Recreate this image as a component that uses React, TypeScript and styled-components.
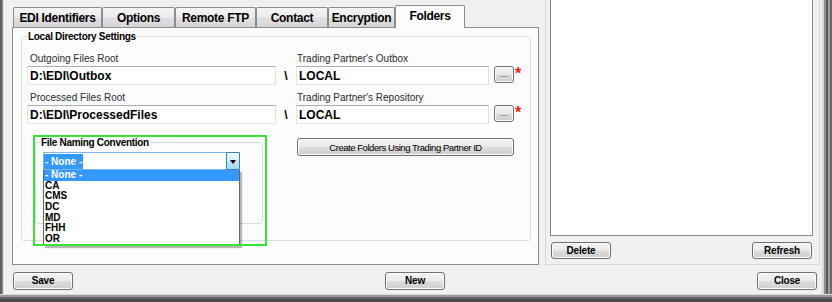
import React from "react";
import styled, { createGlobalStyle } from "styled-components";

const GlobalStyle = createGlobalStyle`
  html, body { margin: 0; padding: 0; }
  body { font-family: "Liberation Sans", Arial, sans-serif; background: #f0eff1; }
  * { box-sizing: border-box; }
`;

const Window = styled.div`
  width: 832px;
  height: 302px;
  display: flex;
  flex-direction: column;
  overflow: hidden;
`;

const FrameRow = styled.div`
  display: flex;
  height: 294px;
`;

const LeftFrame = styled.div`
  width: 4px;
  background: linear-gradient(to right, #555 0, #707070 2px, #a0a0a0 3px, #e4e4e4 3px);
`;

const RightFrame = styled.div`
  width: 10px;
  background: linear-gradient(
    to right,
    #d8d8d8 0 2px,
    #8e8e8e 2px 4px,
    #5a5a5a 4px 6px,
    #9c9c9c 6px 8px,
    #6a6a6a 8px 10px
  );
`;

const BottomFrame = styled.div`
  height: 8px;
  background: linear-gradient(
    to bottom,
    #d8d8d8 0 1px,
    #9a9a9a 1px 3px,
    #636363 3px 5px,
    #4a4a4a 5px 8px
  );
`;

const Client = styled.div`
  flex: 1;
  display: flex;
  flex-direction: column;
  background: #f0eff1;
`;

const TopRow = styled.div`
  display: flex;
  height: 265px;
`;

const TabArea = styled.div`
  margin-left: 8px;
  width: 527px;
  padding-top: 5px;
  display: flex;
  flex-direction: column;
`;

const TabStrip = styled.div`
  display: flex;
  align-items: flex-end;
  height: 22px;
  padding-left: 1px;
`;

const Tab = styled.div<{ $w: number; $active?: boolean }>`
  width: ${(p) => p.$w}px;
  height: ${(p) => (p.$active ? 23 : 20)}px;
  margin-bottom: ${(p) => (p.$active ? -1 : 0)}px;
  position: relative;
  z-index: ${(p) => (p.$active ? 2 : 0)};
  border: 1px solid #898c95;
  border-bottom: none;
  border-radius: 2px 2px 0 0;
  background: ${(p) =>
    p.$active
      ? "#fcfcfc"
      : "linear-gradient(to bottom, #f4f4f4 0%, #ececec 45%, #dfdfdf 55%, #d6d6d6 100%)"};
  display: flex;
  align-items: center;
  justify-content: center;
  padding-bottom: ${(p) => (p.$active ? 3 : 0)}px;
  font: bold 12px/14px "Liberation Sans", Arial, sans-serif;
  letter-spacing: -0.3px;
  color: #000;
  white-space: nowrap;
`;

const TabPanel = styled.div`
  flex: 1;
  border: 1px solid #898c95;
  background: #fcfcfc;
  padding: 3px 7px 0 8px;
`;

const GroupBox = styled.fieldset<{ $h: number; $w?: number }>`
  margin: 0;
  min-width: 0;
  height: ${(p) => p.$h}px;
  ${(p) => (p.$w ? `width: ${p.$w}px;` : "")}
  border: 1px solid #d5dfe5;
  border-radius: 3px;
  padding: 0;
`;

const GroupLegend = styled.legend<{ $x: number }>`
  margin-left: ${(p) => p.$x}px;
  padding: 0 1px;
  font: bold 10px/11px "Liberation Sans", Arial, sans-serif;
  letter-spacing: -0.3px;
  color: #000;
`;

const GroupContent = styled.div`
  padding: 11px 0 0 5px;
  display: flex;
  flex-direction: column;
`;

const FieldRow = styled.div<{ $mt?: number }>`
  display: flex;
  align-items: flex-start;
  margin-top: ${(p) => p.$mt ?? 0}px;
`;

const FieldBlock = styled.div<{ $w: number }>`
  width: ${(p) => p.$w}px;
  display: flex;
  flex-direction: column;
`;

const FieldLabel = styled.div<{ $indent: number }>`
  height: 13px;
  padding-left: ${(p) => p.$indent}px;
  font: 10px/12px "Liberation Sans", Arial, sans-serif;
  color: #2a2a2a;
  white-space: nowrap;
`;

const TextBox = styled.div`
  height: 19px;
  border: 1px solid;
  border-color: #abadb3 #dbdfe6 #e3e9ef #e2e3ea;
  background: #fff;
  padding-left: 2px;
  display: flex;
  align-items: center;
  font: bold 12px/14px "Liberation Sans", Arial, sans-serif;
  color: #000;
  white-space: nowrap;
`;

const PathSep = styled.div`
  width: 20px;
  height: 19px;
  margin-top: 13px;
  display: flex;
  align-items: center;
  justify-content: center;
  font: bold 12px/14px "Liberation Sans", Arial, sans-serif;
  color: #000;
`;

const WinButton = styled.button<{ $w: number; $h: number }>`
  width: ${(p) => p.$w}px;
  height: ${(p) => p.$h}px;
  margin: 0;
  padding: 0;
  border: 1px solid #707070;
  border-radius: 3px;
  background: linear-gradient(to bottom, #f2f2f2 0%, #ebebeb 49%, #dddddd 51%, #cfcfcf 100%);
  box-shadow: inset 0 0 0 1px #fbfbfb;
  font: bold 10px/12px "Liberation Sans", Arial, sans-serif;
  letter-spacing: -0.2px;
  color: #000;
  display: flex;
  align-items: center;
  justify-content: center;
  white-space: nowrap;
`;

const BrowseButton = styled(WinButton)`
  margin-top: 13px;
  margin-left: 5px;
  font: 9px/9px "Liberation Sans", Arial, sans-serif;
  color: #444;
  align-items: flex-end;
  padding-bottom: 3px;
`;

const Required = styled.span`
  margin-top: 13px;
  margin-left: 1px;
  font: bold 16px/16px "Liberation Sans", Arial, sans-serif;
  color: #e41c1c;
`;

const LowerRow = styled.div`
  display: flex;
  align-items: flex-start;
  margin-top: 11px;
`;

const Highlight = styled.div`
  position: relative;
  margin-left: 6px;
  width: 234px;
  height: 111px;
  padding: 2px;
  &::after {
    content: "";
    position: absolute;
    inset: 0;
    border: 2px solid #36e636;
    z-index: 3;
    pointer-events: none;
  }
`;

const InnerContent = styled.div`
  padding: 4px 0 0 7px;
`;

const Combo = styled.div`
  width: 197px;
  height: 18px;
  border: 1px solid #7eb4ea;
  background: #fff;
  display: flex;
  align-items: stretch;
`;

const ComboText = styled.div`
  flex: 1;
  display: flex;
  align-items: center;
`;

const Selection = styled.span`
  background: #3399ff;
  color: #fff;
  font: bold 10px/15px "Liberation Sans", Arial, sans-serif;
  padding: 0 1px;
`;

const ComboArrow = styled.div`
  width: 14px;
  margin: -1px -1px -1px 0;
  border: 1px solid #3c7fb1;
  border-radius: 0 2px 2px 0;
  background: linear-gradient(to bottom, #eaf6fd 0%, #d9f0fc 49%, #bee6fd 51%, #a7d9f5 100%);
  display: flex;
  align-items: center;
  justify-content: center;
  &::before {
    content: "";
    border-left: 3px solid transparent;
    border-right: 3px solid transparent;
    border-top: 4px solid #000;
    margin-top: 1px;
  }
`;

const DropList = styled.ul`
  position: absolute;
  left: 10px;
  top: 35px;
  width: 197px;
  margin: 0;
  padding: 0;
  list-style: none;
  background: #fff;
  border: 1px solid #646464;
  border-top: none;
  box-shadow: 2px 2px 1px rgba(0, 0, 0, 0.28);
  z-index: 2;
`;

const DropItem = styled.li<{ $selected?: boolean }>`
  height: 10.67px;
  padding-left: 1px;
  font: bold 10px/10.67px "Liberation Sans", Arial, sans-serif;
  color: ${(p) => (p.$selected ? "#fff" : "#000")};
  background: ${(p) => (p.$selected ? "#3399ff" : "transparent")};
  white-space: nowrap;
`;

const CreateButton = styled(WinButton)`
  margin-left: 30px;
  margin-top: 3px;
  font: 9.5px/11px "Liberation Sans", Arial, sans-serif;
  letter-spacing: -0.45px;
`;

const RightPanel = styled.div`
  margin-left: 6px;
  width: 275px;
  height: 265px;
  border: 1px solid #d9d9dc;
  border-top: none;
  padding: 0 6px 0 4px;
  display: flex;
  flex-direction: column;
`;

const ListBox = styled.div`
  height: 236px;
  background: #fff;
  border: 1px solid #828790;
  border-top: none;
`;

const PanelButtons = styled.div`
  display: flex;
  justify-content: space-between;
  margin-top: 6px;
  padding: 0 1px;
`;

const BottomBar = styled.div`
  flex: 1;
  display: flex;
  justify-content: space-between;
  align-items: flex-start;
  padding: 7px 5px 0 9px;
`;

const namingOptions = ["- None -", "CA", "CMS", "DC", "MD", "FHH", "OR"];

const tabs: { label: string; w: number; active?: boolean }[] = [
  { label: "EDI Identifiers", w: 89 },
  { label: "Options", w: 73 },
  { label: "Remote FTP", w: 81 },
  { label: "Contact", w: 72 },
  { label: "Encryption", w: 67 },
  { label: "Folders", w: 70, active: true },
];

export default function App() {
  return (
    <>
      <GlobalStyle />
      <Window>
        <FrameRow>
          <LeftFrame />
          <Client>
            <TopRow>
              <TabArea>
                <TabStrip>
                  {tabs.map((t) => (
                    <Tab key={t.label} $w={t.w} $active={t.active}>
                      {t.label}
                    </Tab>
                  ))}
                </TabStrip>
                <TabPanel>
                  <GroupBox $h={210}>
                    <GroupLegend $x={5}>Local Directory Settings</GroupLegend>
                    <GroupContent>
                      <FieldRow>
                        <FieldBlock $w={249}>
                          <FieldLabel $indent={3}>Outgoing Files Root</FieldLabel>
                          <TextBox>D:\EDI\Outbox</TextBox>
                        </FieldBlock>
                        <PathSep>\</PathSep>
                        <FieldBlock $w={193}>
                          <FieldLabel $indent={1}>Trading Partner's Outbox</FieldLabel>
                          <TextBox>LOCAL</TextBox>
                        </FieldBlock>
                        <BrowseButton $w={20} $h={17}>...</BrowseButton>
                        <Required>*</Required>
                      </FieldRow>
                      <FieldRow $mt={7}>
                        <FieldBlock $w={249}>
                          <FieldLabel $indent={3}>Processed Files Root</FieldLabel>
                          <TextBox>D:\EDI\ProcessedFiles</TextBox>
                        </FieldBlock>
                        <PathSep>\</PathSep>
                        <FieldBlock $w={193}>
                          <FieldLabel $indent={1}>Trading Partner's Repository</FieldLabel>
                          <TextBox>LOCAL</TextBox>
                        </FieldBlock>
                        <BrowseButton $w={20} $h={17}>...</BrowseButton>
                        <Required>*</Required>
                      </FieldRow>
                      <LowerRow>
                        <Highlight>
                          <GroupBox $h={87} $w={228}>
                            <GroupLegend $x={4}>File Naming Convention</GroupLegend>
                            <InnerContent>
                              <Combo>
                                <ComboText>
                                  <Selection>- None -</Selection>
                                </ComboText>
                                <ComboArrow />
                              </Combo>
                            </InnerContent>
                          </GroupBox>
                          <DropList>
                            {namingOptions.map((o, i) => (
                              <DropItem key={o} $selected={i === 0}>
                                {o}
                              </DropItem>
                            ))}
                          </DropList>
                        </Highlight>
                        <CreateButton $w={217} $h={18}>
                          Create Folders Using Trading Partner ID
                        </CreateButton>
                      </LowerRow>
                    </GroupContent>
                  </GroupBox>
                </TabPanel>
              </TabArea>
              <RightPanel>
                <ListBox />
                <PanelButtons>
                  <WinButton $w={60} $h={17}>Delete</WinButton>
                  <WinButton $w={60} $h={17}>Refresh</WinButton>
                </PanelButtons>
              </RightPanel>
            </TopRow>
            <BottomBar>
              <WinButton $w={60} $h={18}>Save</WinButton>
              <WinButton $w={60} $h={18}>New</WinButton>
              <WinButton $w={60} $h={18}>Close</WinButton>
            </BottomBar>
          </Client>
          <RightFrame />
        </FrameRow>
        <BottomFrame />
      </Window>
    </>
  );
}
